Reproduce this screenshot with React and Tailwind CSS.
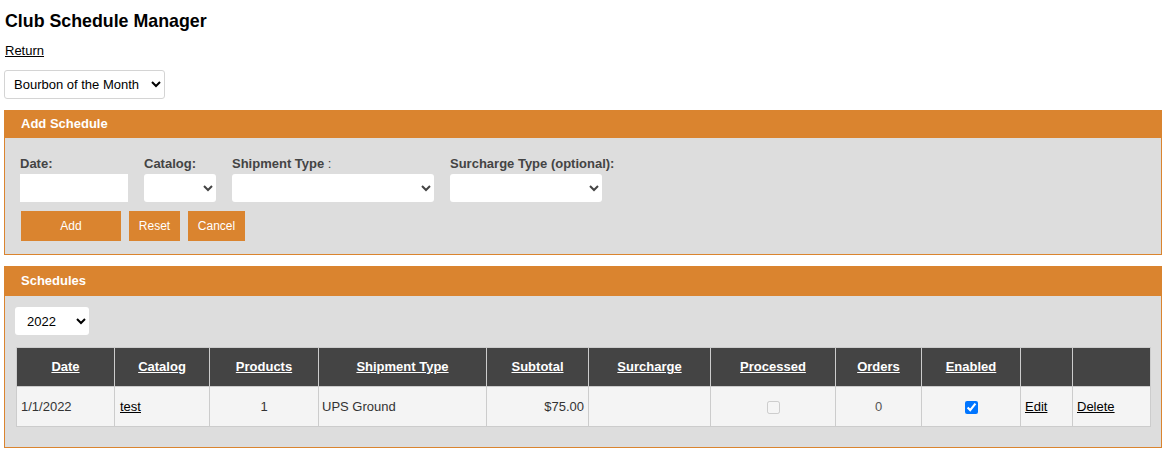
import React from 'react';

const cols = [
  { label: 'Date', w: 98 },
  { label: 'Catalog', w: 95 },
  { label: 'Products', w: 109 },
  { label: 'Shipment Type', w: 168 },
  { label: 'Subtotal', w: 102 },
  { label: 'Surcharge', w: 122 },
  { label: 'Processed', w: 125 },
  { label: 'Orders', w: 86 },
  { label: 'Enabled', w: 99 },
  { label: '', w: 52 },
  { label: '', w: 78 },
];

function PanelHeader({ title, h }) {
  return (
    <div className={`${h} bg-[#da842f] flex items-center pl-[16px] text-white font-bold text-[13px]`}>
      {title}
    </div>
  );
}

export default function App() {
  return (
    <div className="min-h-screen bg-white pl-[4px] pr-[8px] text-black font-['Liberation_Sans',Arial,sans-serif]">
      <h1 className="pt-[11px] pl-[1px] text-[17.8px] leading-[20px] font-bold">Club Schedule Manager</h1>
      <div className="mt-[12px] pl-[1px] text-[13px] leading-[15px]">
        <a href="#" className="underline">Return</a>
      </div>
      <select className="mt-[12px] h-[29px] w-[161px] rounded-[3px] border border-[#d4d4d4] bg-white pl-[5px] text-[13px]">
        <option>Bourbon of the Month</option>
      </select>

      {/* add schedule */}
      <div className="mt-[11px] border border-t-0 border-[#da842f]">
        <PanelHeader title="Add Schedule" h="h-[28px]" />
        <div className="bg-[#dddddd] px-[15px] pt-[18px] pb-[13px]">
          <div className="flex gap-[16px] text-[13px] font-bold text-[#444]">
            <label className="flex flex-col gap-[3px]">
              <span className="leading-[15px]">Date:</span>
              <input type="text" className="h-[28px] w-[108px] bg-white" />
            </label>
            <label className="flex flex-col gap-[3px]">
              <span className="leading-[15px]">Catalog:</span>
              <select className="h-[28px] w-[72px] rounded-[3px] bg-white"><option></option></select>
            </label>
            <label className="flex flex-col gap-[3px]">
              <span className="leading-[15px]">Shipment Type <span className="font-normal">:</span></span>
              <select className="h-[28px] w-[202px] rounded-[3px] bg-white"><option></option></select>
            </label>
            <label className="flex flex-col gap-[3px]">
              <span className="leading-[15px]">Surcharge Type (optional):</span>
              <select className="h-[28px] w-[152px] rounded-[3px] bg-white"><option></option></select>
            </label>
          </div>
          <div className="mt-[9px] ml-[1px] flex gap-[8px] text-[12px] text-white">
            <button className="h-[30px] w-[100px] bg-[#da842f]">Add</button>
            <button className="h-[30px] w-[51px] bg-[#da842f]">Reset</button>
            <button className="h-[30px] w-[57px] bg-[#da842f]">Cancel</button>
          </div>
        </div>
      </div>

      {/* schedules */}
      <div className="mt-[11px] border border-t-0 border-[#da842f]">
        <PanelHeader title="Schedules" h="h-[30px]" />
        <div className="bg-[#dddddd] pl-[10px] pr-[10px] pt-[11px] pb-[20px]">
          <select className="h-[28px] w-[74px] rounded-[3px] bg-white pl-[8px] text-[13px]">
            <option>2022</option>
          </select>
          <table className="mt-[12px] ml-[1px] table-fixed border-collapse text-[13px] text-[#333]">
            <colgroup>
              {cols.map((c, i) => (
                <col key={i} style={{ width: c.w }} />
              ))}
            </colgroup>
            <thead>
              <tr className="h-[39px] bg-[#444444]">
                {cols.map((c, i) => (
                  <th key={i} className="border border-[#cccccc] px-[4px] text-center font-bold text-white">
                    {c.label && <a href="#" className="underline">{c.label}</a>}
                  </th>
                ))}
              </tr>
            </thead>
            <tbody>
              <tr className="h-[40px] bg-[#f4f4f4]">
                <td className="border border-[#cccccc] px-[4px]">1/1/2022</td>
                <td className="border border-[#cccccc] px-[5px]">
                  <a href="#" className="text-black underline">test</a>
                </td>
                <td className="border border-[#cccccc] px-[4px] text-center">1</td>
                <td className="border border-[#cccccc] px-[3px]">UPS Ground</td>
                <td className="border border-[#cccccc] px-[4px] text-right">$75.00</td>
                <td className="border border-[#cccccc] px-[4px]"></td>
                <td className="border border-[#cccccc] px-[4px] text-center">
                  <input type="checkbox" disabled className="align-middle" />
                </td>
                <td className="border border-[#cccccc] px-[4px] text-center text-[#555]">0</td>
                <td className="border border-[#cccccc] px-[4px] text-center">
                  <input type="checkbox" defaultChecked className="align-middle" />
                </td>
                <td className="border border-[#cccccc] px-[4px]">
                  <a href="#" className="text-black underline">Edit</a>
                </td>
                <td className="border border-[#cccccc] px-[4px]">
                  <a href="#" className="text-black underline">Delete</a>
                </td>
              </tr>
            </tbody>
          </table>
        </div>
      </div>
    </div>
  );
}
